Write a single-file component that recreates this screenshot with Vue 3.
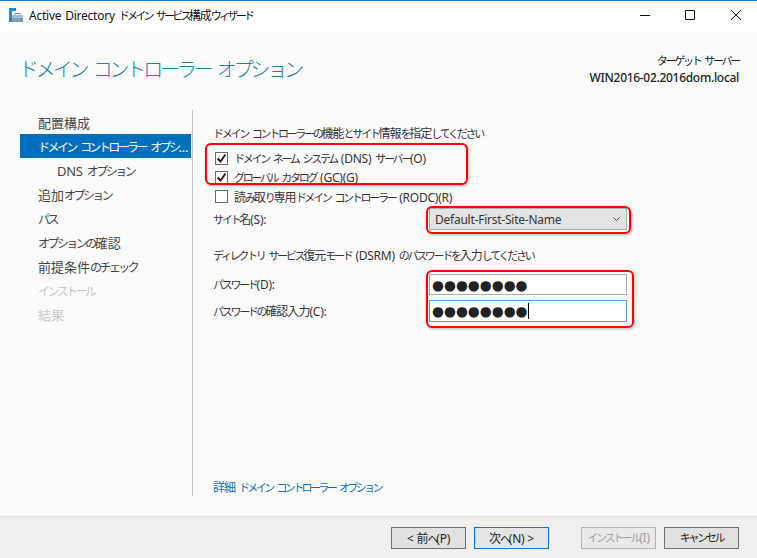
<script setup>
import { h } from 'vue'

// kana are much narrower than kanji in the original UI font, so text is split into runs
const J = (props) =>
  props.t.match(/[\u3040-\u30ff]+|[\u3400-\u9fff]+|[^\u3040-\u30ff\u3400-\u9fff]+/g).map((s) => {
    let c = 'lat'
    if (/[\u3040-\u30ff]/.test(s)) c = 'kana'
    else if (/[\u3400-\u9fff]/.test(s)) c = 'kanji'
    return h('span', { class: c }, s)
  })
J.props = ['t']

const steps = [
  { label: '配置構成' },
  { label: 'ドメイン コントローラー オプシ...', active: true },
  { label: 'DNS オプション', sub: true },
  { label: '追加オプション' },
  { label: 'パス' },
  { label: 'オプションの確認' },
  { label: '前提条件のチェック' },
  { label: 'インストール', off: true },
  { label: '結果', off: true }
]
const checks = [
  { label: 'ドメイン ネーム システム (DNS) サーバー(O)' },
  { label: 'グローバル カタログ (GC)(G)' }
]
</script>

<template>
  <div class="wizard">
    <div class="titlebar">
      <svg class="app_icon" width="16" height="16" viewBox="0 0 16 16">
        <path d="M0 0h7v3H3v11H0z" fill="#1e88d8" />
        <path d="M3 7h11v7H3z" fill="#7d9db5" />
        <path d="M3 7h11v3H3z" fill="#a9bfcf" />
        <path d="M6 7V5.5h5V7" fill="none" stroke="#6d8ca3" />
      </svg>
      <span class="title_text"><J t="Active Directory ドメイン サービス構成ウィザード" /></span>
      <div class="win_btns">
        <svg width="12" height="12" viewBox="0 0 12 12"><path d="M1 6.5h10" stroke="#111" /></svg>
        <svg width="12" height="12" viewBox="0 0 12 12"><path d="M1.5 1.5h9v9h-9z" fill="none" stroke="#111" /></svg>
        <svg class="close" width="12" height="12" viewBox="0 0 12 12"><path d="M1 1l10 10M11 1L1 11" stroke="#111" /></svg>
      </div>
    </div>

    <div class="main">
      <div class="header">
        <h1 class="heading"><J t="ドメイン コントローラー オプション" /></h1>
        <div class="target">
          <div><J t="ターゲット サーバー" /></div>
          <div class="target_name">WIN2016-02.2016dom.local</div>
        </div>
      </div>

      <div class="body">
        <div class="sidebar">
          <div
            v-for="s in steps"
            :key="s.label"
            class="step"
            :class="{ is_active: s.active, is_sub: s.sub, is_off: s.off }"
          ><J :t="s.label" /></div>
        </div>

        <div class="content">
          <div class="line"><J t="ドメイン コントローラーの機能とサイト情報を指定してください" /></div>

          <div class="check_group">
            <div v-for="c in checks" :key="c.label" class="check_row">
              <span class="box">
                <svg width="11" height="11" viewBox="0 0 11 11"><path d="M1.5 5.5l3 3 5-7" fill="none" stroke="#222" stroke-width="2" /></svg>
              </span>
              <span><J :t="c.label" /></span>
            </div>
            <div class="mark mark_checks"></div>
          </div>
          <div class="check_row">
            <span class="box"></span>
            <span><J t="読み取り専用ドメイン コントローラー (RODC)(R)" /></span>
          </div>

          <div class="field site_field">
            <span><J t="サイト名(S):" /></span>
            <div class="select">
              <span class="lat">Default-First-Site-Name</span>
              <svg width="7" height="5" viewBox="0 0 7 5"><path d="M.5 .5l3 3 3-3" fill="none" stroke="#444" /></svg>
              <div class="mark mark_select"></div>
            </div>
          </div>

          <div class="line dsrm"><J t="ディレクトリ サービス復元モード (DSRM) のパスワードを入力してください" /></div>

          <div class="pw_group">
            <div class="field">
              <span><J t="パスワード(D):" /></span>
              <div class="input"><span class="dots">●●●●●●●●</span></div>
            </div>
            <div class="field">
              <span><J t="パスワードの確認入力(C):" /></span>
              <div class="input is_focus"><span class="dots">●●●●●●●●</span><i class="caret"></i></div>
            </div>
            <div class="mark mark_pw"></div>
          </div>

          <a class="more"><J t="詳細 ドメイン コントローラー オプション" /></a>
        </div>
      </div>
    </div>

    <div class="footer">
      <button class="btn"><J t="< 前へ(P)" /></button>
      <button class="btn is_default"><J t="次へ(N) >" /></button>
      <button class="btn is_disabled install"><J t="インストール(I)" /></button>
      <button class="btn"><J t="キャンセル" /></button>
    </div>
  </div>
</template>

<style scoped>
.wizard {
  width: 757px;
  height: 558px;
  display: flex;
  flex-direction: column;
  overflow: hidden;
  font-family: "Noto Sans", "Noto Sans CJK JP", sans-serif;
  font-size: 12px;
  color: #333;
  word-spacing: 1px;
}

/* title bar */
.titlebar {
  height: 28px;
  border-top: 1px solid #1883d7;
  background: #fff;
  display: flex;
  align-items: center;
  flex-shrink: 0;
  padding: 0 0 2px 9px;
  color: #111;
}
.app_icon {
  margin-right: 4px;
  margin-top: 2px;
}
.win_btns {
  margin-left: auto;
  display: flex;
  gap: 33px;
  padding-right: 15px;
}
.close {
  margin-left: 1px;
}

/* main area */
.main {
  flex: 1;
  background: #fbfbfb;
  display: flex;
  flex-direction: column;
  padding-bottom: 20px;
  min-height: 0;
}
.header {
  height: 79px;
  flex-shrink: 0;
  display: flex;
  justify-content: space-between;
  padding: 0 18px 0 19px;
}
.heading {
  margin: 22px 0 0;
  font-size: 21.7px;
  line-height: 32px;
  font-weight: 300;
  color: #1a7fa6;
}
.target {
  padding-top: 21px;
  text-align: right;
  line-height: 17px;
  color: #222;
}
.target_name {
  font-weight: 500;
  letter-spacing: -0.3px;
}

.body {
  flex: 1;
  display: flex;
  min-height: 0;
}

/* left steps */
.sidebar {
  width: 172px;
  margin-left: 20px;
  border-right: 1px solid #c8c8c8;
  flex-shrink: 0;
  font-size: 13px;
}
.step {
  height: 24px;
  line-height: 26px;
  width: 171px;
  padding-left: 18px;
  box-sizing: border-box;
  white-space: nowrap;
  overflow: hidden;
  color: #444;
}
.step.is_active {
  background: #0170bc;
  color: #fff;
}
.step.is_sub {
  padding-left: 37px;
}
.step.is_off {
  color: #c8c8c8;
}

/* right form */
.content {
  flex: 1;
  padding: 15px 0 0 20px;
  display: flex;
  flex-direction: column;
}
.line {
  height: 18px;
  line-height: 18px;
}
.check_group {
  position: relative;
  margin-top: 6px;
}
.check_row {
  height: 19px;
  display: flex;
  align-items: center;
  gap: 6px;
  padding-left: 2px;
}
.box {
  width: 11px;
  height: 11px;
  border: 1px solid #6a6a6a;
  background: #fff;
  display: flex;
  flex-shrink: 0;
}
.field {
  display: grid;
  grid-template-columns: 216px 198px;
  align-items: center;
}
.site_field {
  margin-top: 2px;
}
.select {
  position: relative;
  height: 22px;
  box-sizing: border-box;
  border: 1px solid #acacac;
  background: #e4e4e4;
  display: flex;
  align-items: center;
  justify-content: space-between;
  padding: 0 6px 0 5px;
}
.dsrm {
  margin-top: 17px;
}
.pw_group {
  position: relative;
  margin-top: 9px;
  display: flex;
  flex-direction: column;
  gap: 5px;
}
.input {
  height: 21px;
  box-sizing: border-box;
  border: 1px solid #ababab;
  background: #fff;
  display: flex;
  align-items: center;
  padding-left: 2px;
}
.input.is_focus {
  height: 22px;
  border-color: #569de5;
}
.dots {
  font-family: "DejaVu Sans", sans-serif;
  font-size: 13.7px;
  color: #222;
}
.caret {
  width: 1px;
  height: 16px;
  background: #000;
}
.more {
  margin-top: auto;
  height: 16px;
  line-height: 16px;
  color: #0a6cbd;
}

/* red highlights */
.mark {
  position: absolute;
  border: 2px solid #f00;
  border-radius: 6px;
  box-shadow: 1px 1px 3px rgba(0, 0, 0, 0.3);
  pointer-events: none;
}
.mark_checks {
  left: -8px;
  top: -6px;
  width: 259px;
  height: 38px;
}
.mark_select {
  inset: -3px -5px -5px -4px;
}
.mark_pw {
  left: 213px;
  top: -4px;
  width: 204px;
  height: 54px;
}

/* footer */
.footer {
  height: 42px;
  flex-shrink: 0;
  box-sizing: border-box;
  border-top: 1px solid #dfdfdf;
  background: #f0f0f0;
  display: flex;
  align-items: center;
  justify-content: flex-end;
  gap: 8px;
  padding: 0 18px 0 0;
}
.btn {
  width: 75px;
  height: 22px;
  padding: 0;
  box-sizing: border-box;
  border: 1px solid #707070;
  background: #e1e1e1;
  font: inherit;
  white-space: nowrap;
  color: #222;
}
.btn.is_default {
  border-color: #0078d7;
  background: #e5e5e5;
}
.btn.is_disabled {
  border-color: #adb2b5;
  background: #e9e9e9;
  color: #a0a0a0;
}
.install {
  margin-left: 24px;
}
</style>

<style>
html, body {
  margin: 0;
  overflow: hidden;
}
.lat {
  letter-spacing: -0.02em;
}
.kana {
  font-size: 0.92em;
  letter-spacing: -0.21em;
}
.kanji {
  letter-spacing: -0.08em;
}
.sidebar .kanji {
  letter-spacing: 0;
}
.title_text .kana {
  letter-spacing: -0.25em;
}
.heading .kana {
  letter-spacing: -0.155em;
}
.more .kana {
  letter-spacing: -0.24em;
}
</style>
